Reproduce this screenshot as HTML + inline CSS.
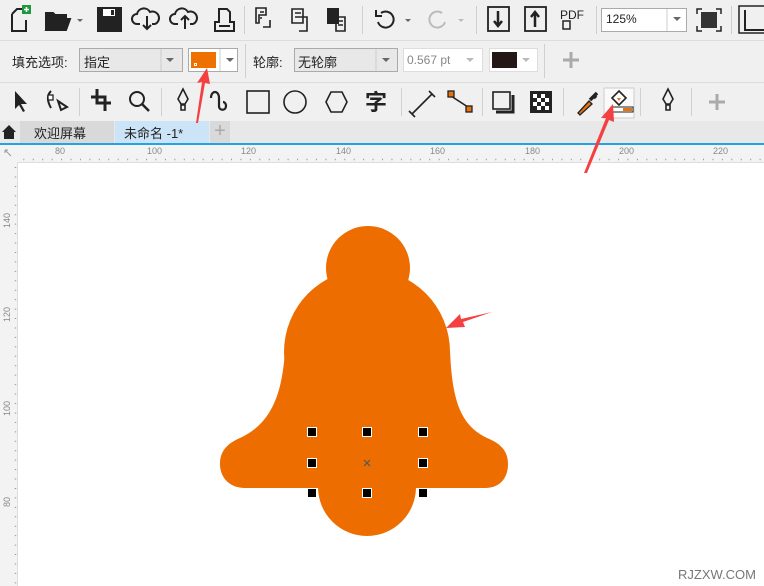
<!DOCTYPE html>
<html><head><meta charset="utf-8"><style>
*{margin:0;padding:0;box-sizing:border-box}
body{width:764px;height:586px;overflow:hidden;background:#fff;font-family:"Liberation Sans","Noto Sans CJK SC",sans-serif;position:relative}
.a{position:absolute}
.t{position:absolute;font-size:13px;color:#222}
</style></head><body>
<div class="a" style="left:0;top:0;width:764px;height:121px;background:#f0f0f0"></div>
<div class="a" style="left:0;top:40px;width:764px;height:1px;background:#dcdcdc"></div>
<div class="a" style="left:0;top:82px;width:764px;height:1px;background:#dcdcdc"></div>

<svg class="a" style="left:0;top:0" width="764" height="121">
<g fill="none" stroke="#222" stroke-width="2">
 <path d="M12 14 L17 9 L25 9 M12 14 V31 H26 V20"/>
 <rect x="22" y="5" width="9" height="9" fill="#1a9a3c" stroke="none"/>
 <path d="M26.5 7v5M24 9.5h5" stroke="#fff" stroke-width="1.5"/>
 <path d="M46 30 V13 H53 L55 15 H66 V18 M46 30 L50 19 H70 L66 30 Z" fill="#222"/>
 <path d="M77 19 l3 3 l3-3z" fill="#666" stroke="none"/>
 <rect x="98" y="8" width="23" height="23" fill="#222"/>
 <rect x="103" y="9" width="12" height="7" fill="#fff" stroke="none"/>
 <rect x="111" y="10" width="3" height="5" fill="#222" stroke="none"/>
 <path d="M140 24 h-3 a5 5 0 0 1 0-10 a7 7 0 0 1 13-2 a5 5 0 0 1 5 12 h-3 M147 16 v13 M143 25 l4 4 l4-4"/>
 <path d="M178 24 h-3 a5 5 0 0 1 0-10 a7 7 0 0 1 13-2 a5 5 0 0 1 5 12 h-3 M185 29 v-13 M181 20 l4-4 l4 4"/>
 <path d="M215 31 V22 H219 V9 H227 L230 12 V22 H234 V31 Z M219 26 H230"/>
 <path d="M256 8 h10 v7 h-7 v8 h-3 z M260 12 h4 M260 18 h2 M270 20 v7 h-7" stroke-width="1.6"/>
 <path d="M292 9 h11 v14 h-11 z M295 13 h6 M295 17 h6 M299 17 h8 v14 h-8" stroke-width="1.6"/>
 <rect x="328" y="9" width="10" height="14" fill="#222"/>
 <path d="M336 17 h9 v14 h-9 z M338 21 h5 M338 25 h5" stroke-width="1.6"/>
 <path d="M381 13 a8 8 0 1 1 -3 9 M376 10 v6 h6"/>
 <path d="M405 19 l3 3 l3-3z" fill="#666" stroke="none"/>
 <path d="M442 13 a8 8 0 1 0 3 9" stroke="#bbb"/>
 <path d="M458 19 l3 3 l3-3z" fill="#bbb" stroke="none"/>
 <rect x="488" y="7" width="21" height="24" stroke-width="1.8"/>
 <path d="M498 11 v14 M494 21 l4 5 l4-5" stroke-width="2.5"/>
 <rect x="525" y="7" width="21" height="24" stroke-width="1.8"/>
 <path d="M535 27 v-14 M531 17 l4-5 l4 5" stroke-width="2.5"/>
 <rect x="563" y="21" width="7" height="8" stroke-width="1.5"/>
 <rect x="701" y="12" width="16" height="16" fill="#333" stroke="none"/>
 <path d="M697 14 v-5 h5 M716 9 h5 v5 M721 26 v5 h-5 M702 31 h-5 v-5" stroke-width="1.5"/>
 <rect x="739" y="6" width="28" height="27" stroke-width="1.5"/>
 <path d="M745 10 v20 h20" stroke-width="2"/>
</g>
<text x="560" y="19" font-size="12" font-family="Liberation Sans" fill="#222">PDF</text>
<g fill="#d0d0d0"><rect x="244" y="6" width="1" height="28"/><rect x="362" y="6" width="1" height="28"/><rect x="476" y="6" width="1" height="28"/><rect x="596" y="6" width="1" height="28"/><rect x="731" y="6" width="1" height="28"/></g>

<g fill="#222" stroke="#222" stroke-width="2">
 <path d="M15 91 v18 l4-4 l4 7 l2-1 l-4-7 h6 z" stroke="none"/>
 <path d="M51 91 c-4 4-4 10 0 17 M58 101 l9 6 l-6 3z" fill="none"/>
 <rect x="48" y="95" width="5" height="5" fill="#fff" stroke-width="1.3"/>
 <path d="M97 89 v14 h14 M91 97 h14 v14" fill="none" stroke-width="3"/>
 <circle cx="137" cy="99" r="7" fill="none"/>
 <path d="M142 104 l7 7" stroke-width="2.5"/>
 <path d="M183 89 l-5 10 l3 5 h4 l3-5 z M181 105 h4 v5 h-4z" fill="none" stroke-width="1.6"/>
 <path d="M211 98 c0-8 8-8 8 0 v8 c0 5 7 5 7 0 c0-3-2-4-3-4" fill="none" stroke-width="2.2"/>
 <rect x="247" y="91" width="22" height="22" fill="none" stroke-width="1.6"/>
 <circle cx="295" cy="102" r="11" fill="none" stroke-width="1.6"/>
 <path d="M326 102 l5-10 h11 l5 10 l-5 10 h-11 z" fill="none" stroke-width="1.6"/>
 <path d="M412 114 l20-20 M409 111 l6 6 M429 91 l6 6" fill="none" stroke-width="1.6"/>
 <path d="M451 96 l20 13" fill="none" stroke-width="1.6"/>
 <rect x="448" y="91" width="6" height="6" fill="#e8730e" stroke-width="1.3"/>
 <rect x="466" y="106" width="6" height="6" fill="#e8730e" stroke-width="1.3"/>
 <rect x="493" y="92" width="17" height="17" fill="none" stroke-width="1.6"/>
 <path d="M513 95 v17 h-17" fill="none" stroke-width="3"/>
 <rect x="530" y="91" width="22" height="22" fill="#222" stroke="none"/>
 <path d="M578 113 l11-12 l3 3 l-12 11z" fill="#e8730e" stroke-width="1.3"/>
 <path d="M590 100 l7-7 M593 95 l3 3" stroke-width="3.5"/>
 <rect x="604" y="88" width="30" height="30" fill="#fafafa" stroke="#ccc" stroke-width="1"/>
 <path d="M619 91 l7 7 l-7 7 l-7-7z" fill="#fff" stroke-width="1.6"/>
 <path d="M617 98 h4 l-2 3z" fill="#e8730e" stroke="none"/>
 <rect x="611" y="107" width="22" height="5" fill="#fff" stroke-width="1"/>
 <rect x="623" y="108" width="9" height="3" fill="#e8730e" stroke="none"/>
 <path d="M668 89 l-5 10 l3 5 h4 l3-5 z M666 105 h4 v5 h-4z" fill="none" stroke-width="1.6"/>
</g>
<g fill="#fff"><rect x="533" y="94" width="4" height="4"/><rect x="541" y="94" width="4" height="4"/><rect x="537" y="98" width="4" height="4"/><rect x="545" y="98" width="4" height="4"/><rect x="533" y="102" width="4" height="4"/><rect x="541" y="102" width="4" height="4"/><rect x="537" y="106" width="4" height="4"/><rect x="545" y="106" width="4" height="4"/></g>
<text x="365" y="110" font-size="22" font-weight="bold" font-family="Noto Sans CJK SC" fill="#222">字</text>
<path d="M717 94 v16 M709 102 h16" stroke="#aaa" stroke-width="3"/>
<path d="M571 52 v16 M563 60 h16" stroke="#aaa" stroke-width="3"/>
<g fill="#d0d0d0"><rect x="79" y="88" width="1" height="28"/><rect x="161" y="88" width="1" height="28"/><rect x="401" y="88" width="1" height="28"/><rect x="482" y="88" width="1" height="28"/><rect x="563" y="88" width="1" height="28"/><rect x="640" y="88" width="1" height="28"/><rect x="691" y="88" width="1" height="28"/><rect x="245" y="44" width="1" height="34"/><rect x="544" y="44" width="1" height="34"/></g>
</svg>

<div class="t" style="left:12px;top:52px">填充选项:</div>
<div class="a" style="left:79px;top:48px;width:104px;height:24px;border:1px solid #aaa;background:#e8e8e8"></div>
<div class="t" style="left:84px;top:52px">指定</div>
<div class="a" style="left:188px;top:48px;width:50px;height:24px;border:1px solid #aaa;background:#fff"></div>
<div class="a" style="left:191px;top:52px;width:25px;height:16px;background:#ee7000"></div>
<div class="a" style="left:194px;top:63px;width:3px;height:3px;border:1px solid #fff"></div>
<div class="t" style="left:253px;top:52px">轮廓:</div>
<div class="a" style="left:294px;top:48px;width:104px;height:24px;border:1px solid #aaa;background:#e8e8e8"></div>
<div class="t" style="left:298px;top:52px">无轮廓</div>
<div class="a" style="left:403px;top:48px;width:80px;height:24px;border:1px solid #ddd;background:#fff"></div>
<div class="t" style="left:407px;top:53px;color:#888;font-size:12px">0.567 pt</div>
<div class="a" style="left:489px;top:48px;width:49px;height:24px;border:1px solid #ddd;background:#fff"></div>
<div class="a" style="left:492px;top:52px;width:25px;height:16px;background:#231815"></div>
<div class="a" style="left:601px;top:8px;width:86px;height:24px;border:1px solid #aaa;background:#fff"></div>
<div class="t" style="left:606px;top:12px;font-size:12px">125%</div>
<svg class="a" style="left:0;top:0" width="764" height="80">
<g fill="#666"><path d="M166 58 l4 4 l4-4z"/><path d="M226 58 l4 4 l4-4z"/><path d="M382 58 l4 4 l4-4z"/><path d="M673 17 l4 4 l4-4z"/></g>
<g fill="#bbb"><path d="M466 58 l4 4 l4-4z"/><path d="M522 58 l4 4 l4-4z"/></g>
<g stroke="#ccc"><path d="M220 49 v22 M161 49 v22 M376 49 v22 M667 9 v22"/></g>
</svg>

<div class="a" style="left:0;top:121px;width:764px;height:22px;background:#e8e8e8"></div>
<div class="a" style="left:20px;top:121px;width:94px;height:22px;background:#d9d9d9"></div>
<div class="a" style="left:115px;top:121px;width:94px;height:22px;background:#cce4f7"></div>
<div class="a" style="left:210px;top:121px;width:20px;height:22px;background:#d9d9d9;color:#aaa;font-size:20px;text-align:center;line-height:20px">+</div>
<svg class="a" style="left:1px;top:124px" width="18" height="16"><path d="M1 8 L8 1 L15 8 H13 V15 H3 V8 Z" fill="#222"/></svg>
<div class="t" style="left:34px;top:123px">欢迎屏幕</div>
<div class="t" style="left:124px;top:123px">未命名 -1*</div>
<div class="a" style="left:0;top:143px;width:764px;height:2px;background:#26a0e6"></div>

<div class="a" style="left:0;top:145px;width:764px;height:17px;background:#f3f3f3"></div>
<div class="a" style="left:0;top:145px;width:17px;height:441px;background:#f3f3f3"></div>
<div class="a" style="left:17px;top:162px;width:747px;height:1px;background:#ddd"></div>
<div class="a" style="left:17px;top:162px;width:1px;height:424px;background:#ddd"></div>
<svg class="a" style="left:0;top:145px" width="764" height="441" font-family="Liberation Sans" font-size="9" fill="#888">
<text x="55" y="9">80</text><text x="147" y="9">100</text><text x="241" y="9">120</text><text x="336" y="9">140</text><text x="430" y="9">160</text><text x="525" y="9">180</text><text x="619" y="9">200</text><text x="713" y="9">220</text>
<g transform="rotate(-90)"><text x="-83" y="10">140</text><text x="-177" y="10">120</text><text x="-271" y="10">100</text><text x="-362" y="10">80</text></g>
<path d="M5 5 l6 6 M5 5 h3 M5 5 v3" stroke="#999" fill="none"/>
<path d="M23.3 14.5 H764" stroke="#999" stroke-width="1.5" stroke-dasharray="1 8.44"/>
<path d="M15.5 22 V441" stroke="#999" stroke-width="1.5" stroke-dasharray="1 8.44"/>
</svg>

<svg class="a" style="left:0;top:0" width="764" height="586">
<g fill="#ed6d00">
<circle cx="368" cy="268" r="42"/>
<circle cx="367" cy="352" r="83"/>
<path d="M285 350 C282 400 268 425 240 438 C226 444 220 452 220 464 C220 478 230 488 245 488 L485 488 C500 488 508 478 508 464 C508 452 502 444 487 438 C460 425 452 400 450 350 Z"/>
<circle cx="367" cy="487" r="49"/>
</g>
<g fill="#000" stroke="#fff" stroke-width="1">
<rect x="307.5" y="427.5" width="9" height="9"/><rect x="362.5" y="427.5" width="9" height="9"/><rect x="418.5" y="427.5" width="9" height="9"/>
<rect x="307.5" y="458.5" width="9" height="9"/><rect x="418.5" y="458.5" width="9" height="9"/>
<rect x="307.5" y="488.5" width="9" height="9"/><rect x="362.5" y="488.5" width="9" height="9"/><rect x="418.5" y="488.5" width="9" height="9"/>
</g>
<path d="M364 460 l6 6 M370 460 l-6 6" stroke="#555" stroke-width="1.2"/>
<g fill="#f44040">
<path d="M196 123 L202 82 L197 83 L207 68 L210 84 L205 83 L198 123 Z"/>
<path d="M584 173 L606 118 L601 118 L613 104 L614 122 L609 120 L587 173 Z"/>
<path d="M492 312 L463 322 L465 327 L446 328 L460 314 L461 319 Z"/>
</g>
<text x="678" y="579" font-size="13" font-family="Liberation Sans" fill="#777">RJZXW.COM</text>
</svg>
</body></html>
